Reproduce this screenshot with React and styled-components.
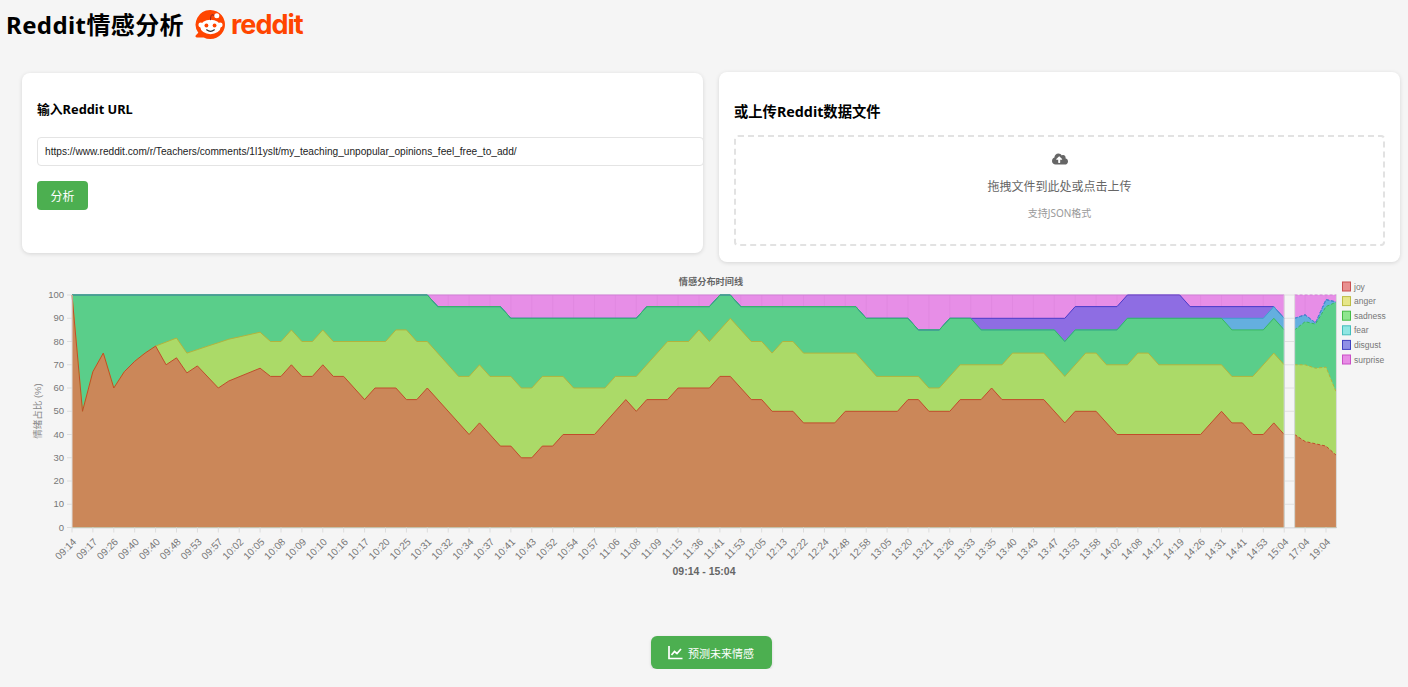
import React from "react";
import styled, { createGlobalStyle } from "styled-components";
import { FaCloudUploadAlt } from "react-icons/fa";

const sans = `"Noto Sans", "Noto Sans CJK SC", sans-serif`;
const arial = `"Liberation Sans", "Noto Sans CJK SC", sans-serif`;

const GlobalStyle = createGlobalStyle`
  html, body { margin: 0; padding: 0; }
  body {
    background: #f5f5f5;
    color: #000;
    font-family: ${sans};
    overflow: hidden;
  }
`;

const Header = styled.header`
  display: flex;
  align-items: center;
  height: 50px;
  padding-left: 6px;
`;

const Title = styled.h1`
  margin: 0;
  font-size: 24px;
  font-weight: 700;
  line-height: 50px;
  letter-spacing: 0.4px;
`;

const Logo = styled.div`
  display: flex;
  align-items: center;
  margin-left: 11px;
  padding-bottom: 1px;
  color: #ff4500;
  font-family: "Inter", sans-serif;
  font-weight: 700;
  font-size: 27px;
  letter-spacing: -1px;
  gap: 5px;
`;

const Container = styled.main`
  width: 1378px;
  margin-left: 22px;
  padding-top: 22px;
`;

const Cards = styled.section`
  display: grid;
  grid-template-columns: 681px 681px;
  gap: 16px;
  align-items: start;
`;

const Card = styled.div`
  box-sizing: border-box;
  height: ${(p) => p.$height}px;
  margin-top: ${(p) => p.$offset || 0}px;
  padding: ${(p) => p.$top}px 15px 0;
  background: #fff;
  border-radius: 8px;
  box-shadow: 0 1px 4px rgba(0, 0, 0, 0.13);
`;

const CardTitle = styled.h3`
  margin: 0;
  font-size: ${(p) => p.$size}px;
  font-weight: 700;
  line-height: 20px;
`;

const UrlInput = styled.input`
  display: block;
  box-sizing: border-box;
  width: 667px;
  height: 29px;
  margin-top: 18px;
  padding: 0 7px;
  border: 1px solid #e4e4e4;
  border-radius: 4px;
  background: #fff;
  color: #222;
  font-family: ${arial};
  font-size: 10.15px;
  outline: none;
`;

const AnalyzeButton = styled.button`
  display: block;
  width: 51px;
  height: 29px;
  margin-top: 15px;
  border: 0;
  border-radius: 4px;
  background: #4caf50;
  color: #fff;
  font-family: ${sans};
  font-size: 12px;
`;

const DropZone = styled.div`
  display: flex;
  flex-direction: column;
  align-items: center;
  box-sizing: border-box;
  height: 111px;
  margin: 13px 0 0;
  padding-top: 14px;
  border: 2px dashed #e2e2e2;
  border-radius: 4px;
  color: #666;
`;

const DropText = styled.div`
  margin-top: 11px;
  font-size: 12px;
  line-height: 18px;
`;

const DropHint = styled.div`
  margin-top: 9px;
  font-size: 10px;
  line-height: 16px;
  color: #999;
`;

const ChartBox = styled.div`
  height: 320px;
  margin-left: -22px;
`;

const ChartSvg = styled.svg`
  display: block;
  font-family: ${arial};
`;

const ForecastRow = styled.div`
  display: flex;
  justify-content: center;
  margin-top: 54px;
`;

const ForecastButton = styled.button`
  display: flex;
  align-items: center;
  justify-content: center;
  gap: 5px;
  width: 121px;
  height: 33px;
  border: 0;
  border-radius: 6px;
  background: #4caf50;
  color: #fff;
  font-family: ${sans};
  font-size: 11px;
  box-shadow: 0 1px 3px rgba(0, 0, 0, 0.15);
`;

// chart scale
const x0 = 72;
const step = 10.45;
const yBase = 527.5;
const yScale = 2.325;
const px = (i) => x0 + step * i;
const py = (v) => yBase - v * yScale;

const labels =
  "09:14 09:17 09:26 09:40 09:40 09:48 09:53 09:57 10:02 10:05 10:08 10:09 10:10 10:16 10:17 10:20 10:25 10:31 10:32 10:34 10:37 10:41 10:43 10:52 10:54 10:57 11:06 11:08 11:09 11:15 11:36 11:41 11:53 12:05 12:13 12:22 12:24 12:48 12:58 13:05 13:20 13:21 13:26 13:33 13:35 13:40 13:43 13:47 13:53 13:58 14:02 14:08 14:12 14:19 14:26 14:31 14:41 14:53 15:04 17:04 19:04".split(" ");

// cumulative tops as [index, value] keypoints, straight between them
const joyTop = [
  [0, 100], [1, 50], [2, 67], [3, 75], [4, 60], [5, 67], [6, 71.5], [7, 75], [8, 78], [9, 70], [10, 73], [11, 66.5], [12, 69.5], [14, 60], [15, 63], [18, 68.5], [19, 65], [20, 65], [21, 70], [22, 65], [23, 65], [24, 70], [25, 65], [26, 65], [28, 55], [29, 60], [31, 60], [32, 55], [33, 55], [34, 60], [38, 40], [39, 45], [41, 35], [42, 35], [43, 30], [44, 30], [45, 35], [46, 35], [47, 40], [50, 40], [53, 55], [54, 50], [55, 55], [57, 55], [58, 60], [61, 60], [62, 65], [63, 65], [65, 55], [66, 55], [67, 50], [69, 50], [70, 45], [73, 45], [74, 50], [79, 50], [80, 55], [81, 55], [82, 50], [84, 50], [85, 55], [87, 55], [88, 60], [89, 55], [93, 55], [95, 45], [96, 50], [98, 50], [100, 40], [108, 40], [110, 50], [111, 45], [112, 45], [113, 40], [114, 40], [115, 45], [116, 40], [117, 40], [118, 37], [119, 36], [120, 35], [121, 31],
];
const angerTop = [
  [0, 100], [1, 50], [2, 67], [3, 75], [4, 60], [5, 67], [6, 71.5], [7, 75], [8, 78], [10, 81.5], [11, 75], [12, 76.5], [13, 78], [14, 79.5], [15, 81], [16, 82], [18, 84], [19, 80], [20, 80], [21, 85], [22, 80], [23, 80], [24, 85], [25, 80], [30, 80], [31, 85], [32, 85], [33, 80], [34, 80], [37, 65], [38, 65], [39, 70], [40, 65], [42, 65], [43, 60], [44, 60], [45, 65], [47, 65], [48, 60], [51, 60], [52, 65], [54, 65], [57, 80], [59, 80], [60, 85], [61, 80], [63, 90], [65, 80], [66, 80], [67, 75], [68, 80], [69, 80], [70, 75], [75, 75], [77, 65], [81, 65], [82, 60], [83, 60], [85, 70], [89, 70], [90, 75], [93, 75], [95, 65], [97, 75], [98, 75], [99, 70], [101, 70], [102, 75], [103, 75], [104, 70], [110, 70], [111, 65], [113, 65], [115, 75], [116, 70], [117, 70], [118, 70], [119, 68.5], [120, 69], [121, 58],
];
const sadnessTop = [
  [0, 100], [34, 100], [35, 95], [41, 95], [42, 90], [54, 90], [55, 95], [61, 95], [62, 100], [63, 100], [64, 95], [75, 95], [76, 90], [80, 90], [81, 85], [83, 85], [84, 90], [86, 90], [87, 85], [94, 85], [95, 80], [96, 85], [100, 85], [101, 90], [110, 90], [111, 85], [114, 85], [115, 90], [116, 85], [117, 85], [118, 88.5], [119, 87.5], [120, 95], [121, 97],
];
const fearTop = [
  [0, 100], [34, 100], [35, 95], [41, 95], [42, 90], [54, 90], [55, 95], [61, 95], [62, 100], [63, 100], [64, 95], [75, 95], [76, 90], [80, 90], [81, 85], [83, 85], [84, 90], [86, 90], [87, 85], [94, 85], [95, 80], [96, 85], [100, 85], [101, 90], [110, 90], [114, 90], [115, 95], [116, 90], [117, 90], [118, 91.5], [119, 88], [120, 98], [121, 97],
];
const disgustTop = [
  [0, 100], [34, 100], [35, 95], [41, 95], [42, 90], [54, 90], [55, 95], [61, 95], [62, 100], [63, 100], [64, 95], [75, 95], [76, 90], [80, 90], [81, 85], [83, 85], [84, 90], [95, 90], [96, 95], [100, 95], [101, 100], [106, 100], [107, 95], [115, 95], [116, 90], [117, 90], [118, 91.5], [119, 88], [120, 98], [121, 97],
];
const surpriseTop = [[0, 100], [116, 100], [117, 100], [121, 100]];

const series = [
  { name: "surprise", top: surpriseTop, fill: "#e78ee7", line: "#d27fd8", swatch: "#e88ce6", edge: "#c94fc6" },
  { name: "disgust", top: disgustTop, fill: "#8e6de3", line: "#4a3bc8", swatch: "#8f8fe6", edge: "#4040c0" },
  { name: "fear", top: fearTop, fill: "#64afdf", line: "#3f9fce", swatch: "#8fe6e3", edge: "#45bdbb" },
  { name: "sadness", top: sadnessTop, fill: "#5ace8a", line: "#38b860", swatch: "#8fe68f", edge: "#45bb45" },
  { name: "anger", top: angerTop, fill: "#abda68", line: "#b3b33c", swatch: "#e6e68a", edge: "#bdbd45" },
  { name: "joy", top: joyTop, fill: "#cb8759", line: "#c04c2c", swatch: "#e88f8f", edge: "#c94f4f" },
];

const legendOrder = ["joy", "anger", "sadness", "fear", "disgust", "surprise"];

const segment = (top, from, to) => top.filter(([i]) => i >= from && i <= to);
const toLine = (pts) => pts.map(([i, v]) => `${px(i).toFixed(1)},${py(v).toFixed(1)}`).join(" ");
const toArea = (pts) =>
  `${toLine(pts)} ${px(pts[pts.length - 1][0]).toFixed(1)},${yBase} ${px(pts[0][0]).toFixed(1)},${yBase}`;

function Chart() {
  const ticksY = [0, 10, 20, 30, 40, 50, 60, 70, 80, 90, 100];
  return (
    <ChartSvg width="1408" height="320" viewBox="0 262 1408 320">
      <text x="711" y="285" textAnchor="middle" fontSize="9.2" fontWeight="700" fill="#666">情感分布时间线</text>

      {ticksY.map((v) => (
        <g key={v}>
          <line x1={x0} x2={px(121)} y1={py(v)} y2={py(v)} stroke="#e0e0e0" />
          <line x1={x0 - 5} x2={x0} y1={py(v)} y2={py(v)} stroke="#ddd" />
          <text x={x0 - 8} y={py(v) + 3} textAnchor="end" fontSize="9.5" fill="#777">{v}</text>
        </g>
      ))}

      <text transform="translate(41 411) rotate(-90)" textAnchor="middle" fontSize="9.5" fill="#888">情绪占比 (%)</text>

      {series.map((s, n) => (
        <g key={s.name}>
          <polygon points={toArea(segment(s.top, 0, 116))} fill={s.fill} />
          <polygon points={toArea(segment(s.top, 117, 121))} fill={s.fill} />
          {n === 0 &&
            labels.map((l, t) => (
              <line key={t} x1={px(t * 2)} x2={px(t * 2)} y1={py(100)} y2={py(80)} stroke="#d67fd6" strokeOpacity="0.35" />
            ))}
        </g>
      ))}
      {series.map((s) => (
        <g key={s.name} fill="none" stroke={s.line} strokeWidth="1">
          <polyline points={toLine(segment(s.top, 0, 116))} />
          <polyline points={toLine(segment(s.top, 117, 121))} strokeDasharray="3 2" />
        </g>
      ))}

      <line x1={px(116)} x2={px(116)} y1={py(100)} y2={yBase} stroke="#ddd" />
      <line x1={px(117)} x2={px(117)} y1={py(100)} y2={yBase} stroke="#ddd" />
      <line x1={px(121)} x2={px(121)} y1={py(100)} y2={yBase} stroke="#ddd" />
      <line x1={x0} x2={x0} y1={py(100)} y2={yBase} stroke="#ddd" />
      <line x1={x0} x2={px(121)} y1={yBase + 0.5} y2={yBase + 0.5} stroke="#dcdce2" />

      {labels.map((l, t) => {
        const x = px(t * 2);
        return (
          <g key={t}>
            <line x1={x} x2={x} y1={yBase} y2={yBase + 5} stroke="#ddd" />
            <text transform={`translate(${x + 5} ${yBase + 15}) rotate(-45)`} textAnchor="end" fontSize="10" fill="#777">{l}</text>
          </g>
        );
      })}

      <text x="704" y="575" textAnchor="middle" fontSize="10.5" fontWeight="700" fill="#666">09:14 - 15:04</text>

      {legendOrder.map((name, n) => {
        const s = series.find((d) => d.name === name);
        const y = 282 + n * 14.6;
        return (
          <g key={name}>
            <rect x="1342.5" y={y} width="8" height="9" fill={s.swatch} stroke={s.edge} />
            <text x="1354" y={y + 7.5} fontSize="8.5" fill="#777">{name}</text>
          </g>
        );
      })}
    </ChartSvg>
  );
}

function RedditMark() {
  return (
    <svg width="31" height="31" viewBox="0 0 32 32">
      <path d="M16 1a15 15 0 1 1-7 28.300H1.800c-1.200 0-1.700-1.300-.9-2.100l2.500-2.600A15 15 0 0 1 16 1z" fill="#ff4500" />
      <ellipse cx="16" cy="18.500" rx="10.500" ry="7.500" fill="#fff" />
      <circle cx="6" cy="16.500" r="2.500" fill="#fff" />
      <circle cx="26" cy="16.500" r="2.500" fill="#fff" />
      <circle cx="11.800" cy="17" r="2" fill="#ff4500" />
      <circle cx="20.200" cy="17" r="2" fill="#ff4500" />
      <path d="M12 21.500c2.500 2 5.500 2 8 0" fill="none" stroke="#333" strokeWidth="1.200" strokeLinecap="round" />
      <path d="M16 11.500c0-3 .6-5.200 1.400-5.600l4 1" fill="none" stroke="#842123" strokeWidth="1" />
      <circle cx="22.500" cy="7" r="2.600" fill="#fff" />
    </svg>
  );
}

function ChartLineIcon() {
  return (
    <svg width="15" height="15" viewBox="0 0 15 15" fill="none" stroke="#fff" strokeWidth="1.700">
      <path d="M1 1v12.500h13.500" />
      <path d="M3.500 10l3-3.500 2.500 2 4-4.500" />
    </svg>
  );
}

export default function App() {
  return (
    <>
      <GlobalStyle />
      <Header>
        <Title>Reddit情感分析</Title>
        <Logo>
          <RedditMark />
          reddit
        </Logo>
      </Header>
      <Container>
        <Cards>
          <Card $height={180} $offset={1} $top={26}>
            <CardTitle $size={12.8}>输入Reddit URL</CardTitle>
            <UrlInput readOnly value="https://www.reddit.com/r/Teachers/comments/1l1yslt/my_teaching_unpopular_opinions_feel_free_to_add/" />
            <AnalyzeButton>分析</AnalyzeButton>
          </Card>
          <Card $height={190} $top={30}>
            <CardTitle $size={14.3}>或上传Reddit数据文件</CardTitle>
            <DropZone>
              <FaCloudUploadAlt size={16} />
              <DropText>拖拽文件到此处或点击上传</DropText>
              <DropHint>支持JSON格式</DropHint>
            </DropZone>
          </Card>
        </Cards>
        <ChartBox>
          <Chart />
        </ChartBox>
        <ForecastRow>
          <ForecastButton>
            <ChartLineIcon />
            预测未来情感
          </ForecastButton>
        </ForecastRow>
      </Container>
    </>
  );
}
